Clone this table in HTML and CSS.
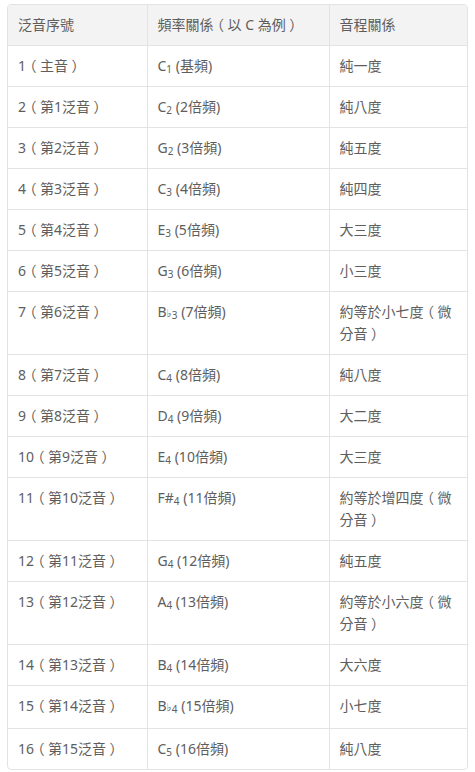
FILE: index.html
```html
<!DOCTYPE html>
<html lang="zh-Hant">
<head>
<meta charset="utf-8">
<link rel="stylesheet" href="styles.css">
</head>
<body>
<div class="table-wrap">
<table class="harm">
<colgroup><col class="c1"><col class="c2"><col class="c3"></colgroup>
<thead>
<tr><th>泛音序號</th><th>頻率關係<span class="pp">（</span>以 C 為例<span class="pp">）</span></th><th>音程關係</th></tr>
</thead>
<tbody>
<tr><td>1<span class="pp">（</span>主音<span class="pp">）</span></td><td>C<sub>1</sub> (基頻)</td><td>純一度</td></tr>
<tr><td>2<span class="pp">（</span>第1泛音<span class="pp">）</span></td><td>C<sub>2</sub> (2倍頻)</td><td>純八度</td></tr>
<tr><td>3<span class="pp">（</span>第2泛音<span class="pp">）</span></td><td>G<sub>2</sub> (3倍頻)</td><td>純五度</td></tr>
<tr><td>4<span class="pp">（</span>第3泛音<span class="pp">）</span></td><td>C<sub>3</sub> (4倍頻)</td><td>純四度</td></tr>
<tr><td>5<span class="pp">（</span>第4泛音<span class="pp">）</span></td><td>E<sub>3</sub> (5倍頻)</td><td>大三度</td></tr>
<tr><td>6<span class="pp">（</span>第5泛音<span class="pp">）</span></td><td>G<sub>3</sub> (6倍頻)</td><td>小三度</td></tr>
<tr><td>7<span class="pp">（</span>第6泛音<span class="pp">）</span></td><td>B<span class="flat">♭</span><sub>3</sub> (7倍頻)</td><td>約等於小七度<span class="pp">（</span><span>微</span><span>分音</span><span class="pp">）</span></td></tr>
<tr><td>8<span class="pp">（</span>第7泛音<span class="pp">）</span></td><td>C<sub>4</sub> (8倍頻)</td><td>純八度</td></tr>
<tr><td>9<span class="pp">（</span>第8泛音<span class="pp">）</span></td><td>D<sub>4</sub> (9倍頻)</td><td>大二度</td></tr>
<tr><td>10<span class="pp">（</span>第9泛音<span class="pp">）</span></td><td>E<sub>4</sub> (10倍頻)</td><td>大三度</td></tr>
<tr><td>11<span class="pp">（</span>第10泛音<span class="pp">）</span></td><td>F#<sub>4</sub> (11倍頻)</td><td>約等於增四度<span class="pp">（</span><span>微</span><span>分音</span><span class="pp">）</span></td></tr>
<tr><td>12<span class="pp">（</span>第11泛音<span class="pp">）</span></td><td>G<sub>4</sub> (12倍頻)</td><td>純五度</td></tr>
<tr><td>13<span class="pp">（</span>第12泛音<span class="pp">）</span></td><td>A<sub>4</sub> (13倍頻)</td><td>約等於小六度<span class="pp">（</span><span>微</span><span>分音</span><span class="pp">）</span></td></tr>
<tr><td>14<span class="pp">（</span>第13泛音<span class="pp">）</span></td><td>B<sub>4</sub> (14倍頻)</td><td>大六度</td></tr>
<tr><td>15<span class="pp">（</span>第14泛音<span class="pp">）</span></td><td>B<span class="flat">♭</span><sub>4</sub> (15倍頻)</td><td>小七度</td></tr>
<tr><td>16<span class="pp">（</span>第15泛音<span class="pp">）</span></td><td>C<sub>5</sub> (16倍頻)</td><td>純八度</td></tr>
</tbody>
</table>
</div>
</body>
</html>
```

FILE: styles.css
```css
html, body {
  margin: 0;
  padding: 0;
  background: #ffffff;
}

body {
  padding: 4px 7px 0 7px;
  font-family: "Noto Sans", "Noto Sans CJK TC", sans-serif;
  font-size: 14px;
  color: #5e5e5e;
}

.table-wrap {
  width: 461px;
  box-sizing: border-box;
  border: 1px solid #e3e3e3;
  border-radius: 4px;
  overflow: hidden;
}

.harm {
  width: 100%;
  table-layout: fixed;
  border-collapse: collapse;
}

.c1 { width: 139px; }
.c2 { width: 182px; }
.c3 { width: 138px; }

.harm th,
.harm td {
  padding: 9px 10px 9px 10px;
  line-height: 22px;
  text-align: left;
  vertical-align: top;
  border-right: 1px solid #e3e3e3;
  border-bottom: 1px solid #e3e3e3;
  font-weight: 400;
}

.harm th:last-child,
.harm td:last-child {
  border-right: none;
}

.harm tbody tr:last-child td {
  border-bottom: none;
}

.harm th {
  background: #f3f3f3;
  color: #5e5e5e;
}

.harm sub {
  font-size: 10px;
  line-height: 0;
  vertical-align: -2px;
}

/* fullwidth parentheses drawn centred in their em box */
.pp {
  font-feature-settings: "halt" 1;
  margin: 0 3.5px;
}

.flat {
  font-size: 11px;
  font-family: "DejaVu Sans", sans-serif;
}
```
